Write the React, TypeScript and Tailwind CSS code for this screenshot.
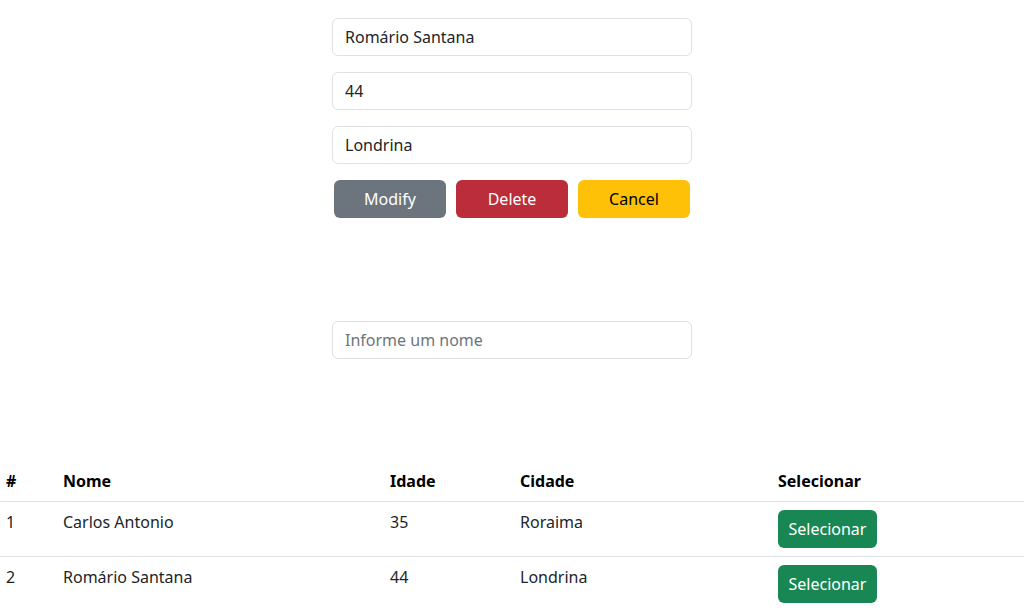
const pessoas = [
  { id: 1, nome: "Carlos Antonio", idade: 35, cidade: "Roraima" },
  { id: 2, nome: "Romário Santana", idade: 44, cidade: "Londrina" },
];

const inputCls =
  "block w-full h-[38px] px-3 border border-[#dee2e6] rounded-md text-base text-[#212529] bg-white outline-none placeholder:text-[#6c757d]";

export default function App() {
  return (
    <div className="bg-white min-h-[611px] text-[#212529] font-['Noto_Sans',sans-serif] text-base">
      <div className="w-[360px] mx-auto pt-[18px]">
        <input className={inputCls} defaultValue="Romário Santana" />
        <input className={inputCls + " mt-4"} defaultValue="44" />
        <input className={inputCls + " mt-4"} defaultValue="Londrina" />
        <div className="flex gap-[10px] px-[2px] mt-4">
          <button className="w-[112px] h-[38px] rounded-md bg-[#6c757d] text-white">
            Modify
          </button>
          <button className="w-[112px] h-[38px] rounded-md bg-[#bb2d3b] text-white">
            Delete
          </button>
          <button className="w-[112px] h-[38px] rounded-md bg-[#ffc107] text-black">
            Cancel
          </button>
        </div>
        <input className={inputCls + " mt-[103px]"} placeholder="Informe um nome" />
      </div>

      <table className="w-full mt-[102px] border-collapse text-left">
        <thead>
          <tr className="border-b border-[#dee2e6]">
            <th className="w-[55px] pl-[6px] py-2 font-bold text-black">#</th>
            <th className="w-[327px] px-2 py-2 font-bold text-black">Nome</th>
            <th className="w-[130px] px-2 py-2 font-bold text-black">Idade</th>
            <th className="w-[258px] px-2 py-2 font-bold text-black">Cidade</th>
            <th className="px-2 py-2 font-bold text-black">Selecionar</th>
          </tr>
        </thead>
        <tbody>
          {pessoas.map((p) => (
            <tr key={p.id} className="border-b border-[#dee2e6] align-top">
              <td className="pl-[6px] py-2">{p.id}</td>
              <td className="px-2 py-2">{p.nome}</td>
              <td className="px-2 py-2">{p.idade}</td>
              <td className="px-2 py-2">{p.cidade}</td>
              <td className="px-2 py-2">
                <button className="w-[99px] h-[38px] rounded-md bg-[#198754] text-white">
                  Selecionar
                </button>
              </td>
            </tr>
          ))}
        </tbody>
      </table>
    </div>
  );
}
